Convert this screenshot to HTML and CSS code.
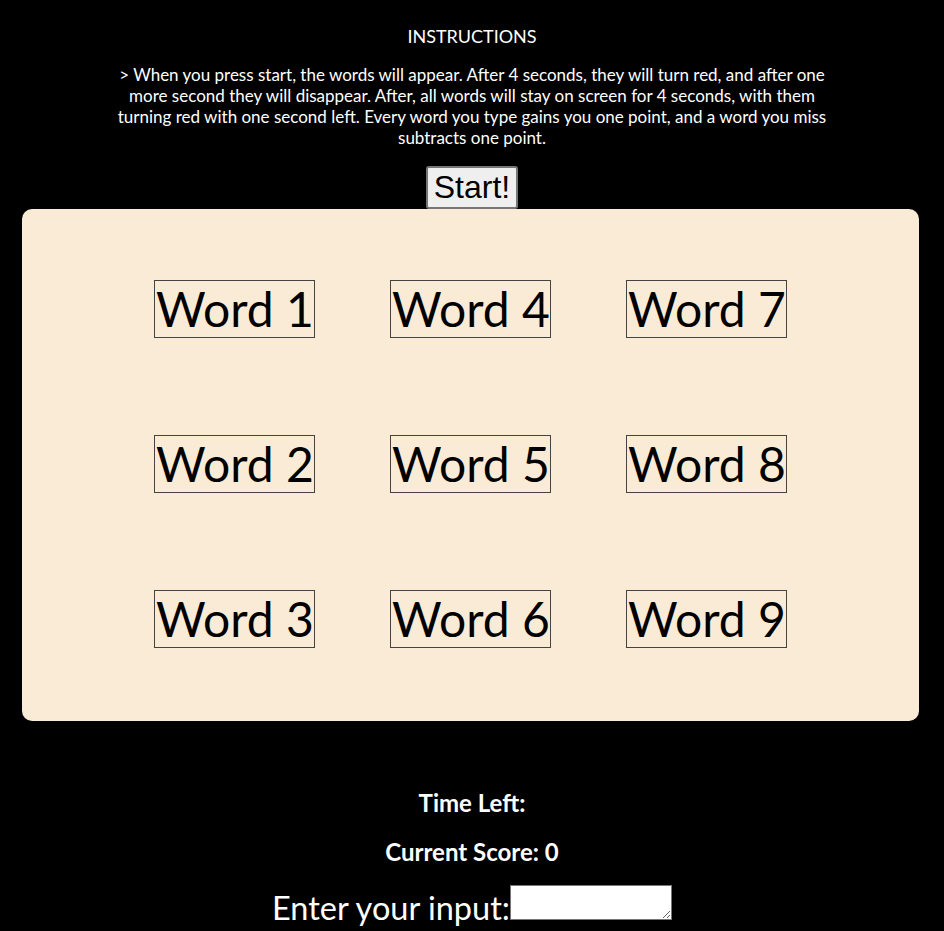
FILE: index.html
```html
<!DOCTYPE html>
<html>
<head>
<meta charset="utf-8">
<link rel="stylesheet" href="styles.css">
</head>
<body>
<div class="intro">
  <h4 class="title">INSTRUCTIONS</h4>
  <p class="text">&gt; When you press start, the words will appear. After 4 seconds, they will turn red, and after one more second they will disappear. After, all words will stay on screen for 4 seconds, with them turning red with one second left. Every word you type gains you one point, and a word you miss subtracts one point.</p>
  <button class="start">Start!</button>
</div>
<div class="board">
  <div class="grid">
    <span class="word">Word 1</span>
    <span class="word">Word 4</span>
    <span class="word">Word 7</span>
    <span class="word">Word 2</span>
    <span class="word">Word 5</span>
    <span class="word">Word 8</span>
    <span class="word">Word 3</span>
    <span class="word">Word 6</span>
    <span class="word">Word 9</span>
  </div>
</div>
<div class="status">
  <h3 class="stat stat-time">Time Left:</h3>
  <h3 class="stat stat-score">Current Score: 0</h3>
  <div class="entry"><label class="entry-label">Enter your input:</label><textarea class="entry-box"></textarea></div>
</div>
</body>
</html>
```

FILE: styles.css
```css
html, body {
  background: #000;
}
body {
  margin: 8px;
  font-family: Lato, "Liberation Sans", sans-serif;
  color: #fff;
}
.intro {
  text-align: center;
}
.title {
  margin: 0;
  padding-top: 18px;
  font-size: 18px;
  font-weight: normal;
  line-height: 20px;
}
.text {
  width: 740px;
  margin: 18px auto 0;
  font-size: 17px;
  line-height: 21px;
}
.start {
  margin-top: 18px;
  font-family: "Liberation Sans", Arial, sans-serif;
  font-size: 32px;
  line-height: 37px;
  padding: 1px 6px;
  background: #efefef;
  color: #000;
  border: 2px solid #767676;
  border-radius: 3px;
  vertical-align: top;
  display: inline-block;
}
.board {
  width: 897px;
  margin-left: 14px;
  background: #faebd7;
  border-radius: 10px;
  padding: 71px 0 73px;
}
.grid {
  display: grid;
  grid-template-columns: repeat(3, 236px);
  justify-content: center;
  row-gap: 97px;
  justify-items: center;
}
.word {
  display: inline-block;
  color: #000;
  font-size: 48px;
  line-height: 56px;
  border: 1px solid #444;
  padding: 0 0 0 1px;
}
.status {
  text-align: center;
  padding-top: 68px;
}
.stat {
  margin: 0;
  font-size: 24px;
  font-weight: bold;
  line-height: 28px;
}
.stat-score {
  margin-top: 21px;
}
.entry {
  margin-top: 19px;
}
.entry-label {
  font-size: 32.5px;
}
.entry-box {
  width: 162px;
  height: 35px;
  box-sizing: border-box;
  background: #fff;
  border: 1px solid #767676;
  vertical-align: baseline;
  resize: both;
}
```
